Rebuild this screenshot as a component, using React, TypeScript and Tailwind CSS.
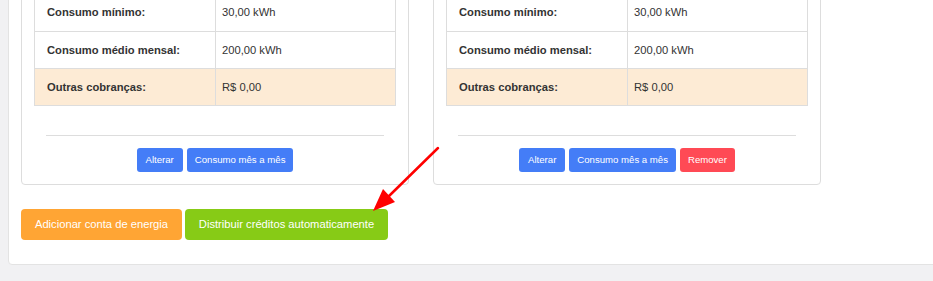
import React from "react";

const rows = [
  { label: "Consumo mínimo:", value: "30,00 kWh", hl: false },
  { label: "Consumo médio mensal:", value: "200,00 kWh", hl: false },
  { label: "Outras cobranças:", value: "R$ 0,00", hl: true },
];

function Card({ remove }: { remove?: boolean }) {
  return (
    <div className="w-[388px] border border-[#dddddd] rounded-[4px] bg-white p-3">
      <div className="border border-[#dddddd]">
        {rows.map((r, i) => (
          <div
            key={i}
            className={
              "flex h-[37px] text-[11.2px] text-[#333333] " +
              (i > 0 ? "border-t border-[#dddddd] " : "h-[36px] ") +
              (r.hl ? "bg-[#fdebd5]" : "bg-white")
            }
          >
            <div className="w-[181px] flex items-center pl-3 font-bold border-r border-[#dddddd]">
              {r.label}
            </div>
            <div className="flex-1 flex items-center pl-[6px]">{r.value}</div>
          </div>
        ))}
      </div>
      <div className="mx-3 mt-[29px] border-t border-[#dddddd]" />
      <div className="mt-3 flex justify-center gap-[4px]">
        <button className="h-[24px] px-[9px] rounded-[3px] bg-[#447df7] text-white text-[9.6px]">
          Alterar
        </button>
        <button className="h-[24px] px-[8px] rounded-[3px] bg-[#447df7] text-white text-[9.6px]">
          Consumo mês a mês
        </button>
        {remove && (
          <button className="h-[24px] px-[8px] rounded-[3px] bg-[#ff4a55] text-white text-[9.6px]">
            Remover
          </button>
        )}
      </div>
    </div>
  );
}

export default function App() {
  return (
    <div
      className="relative w-[933px] h-[281px] overflow-hidden bg-[#f1f1f3]"
      style={{ fontFamily: '"Liberation Sans", Arial, sans-serif' }}
    >
      <div className="ml-2 mt-[-33px] w-[960px] border border-[#e3e3e3] rounded-[4px] bg-white pl-3 pt-3 pb-6">
        <div className="flex gap-6">
          <Card />
          <Card remove />
        </div>
        <div className="mt-6 flex gap-[3px]">
          <button className="h-[31px] w-[161px] rounded-[4px] bg-[#ffa534] text-white text-[11.2px]">
            Adicionar conta de energia
          </button>
          <button className="h-[31px] w-[203px] rounded-[4px] bg-[#87cb16] text-white text-[11.2px]">
            Distribuir créditos automaticamente
          </button>
        </div>
      </div>
      <svg
        className="absolute left-0 top-0 pointer-events-none"
        width="933"
        height="281"
        viewBox="0 0 933 281"
      >
        <line x1="438" y1="148" x2="388" y2="197" stroke="#ff0000" strokeWidth="2.5" strokeLinecap="round" />
        <polygon points="373,211 383,189 395,202" fill="#ff0000" />
      </svg>
    </div>
  );
}
